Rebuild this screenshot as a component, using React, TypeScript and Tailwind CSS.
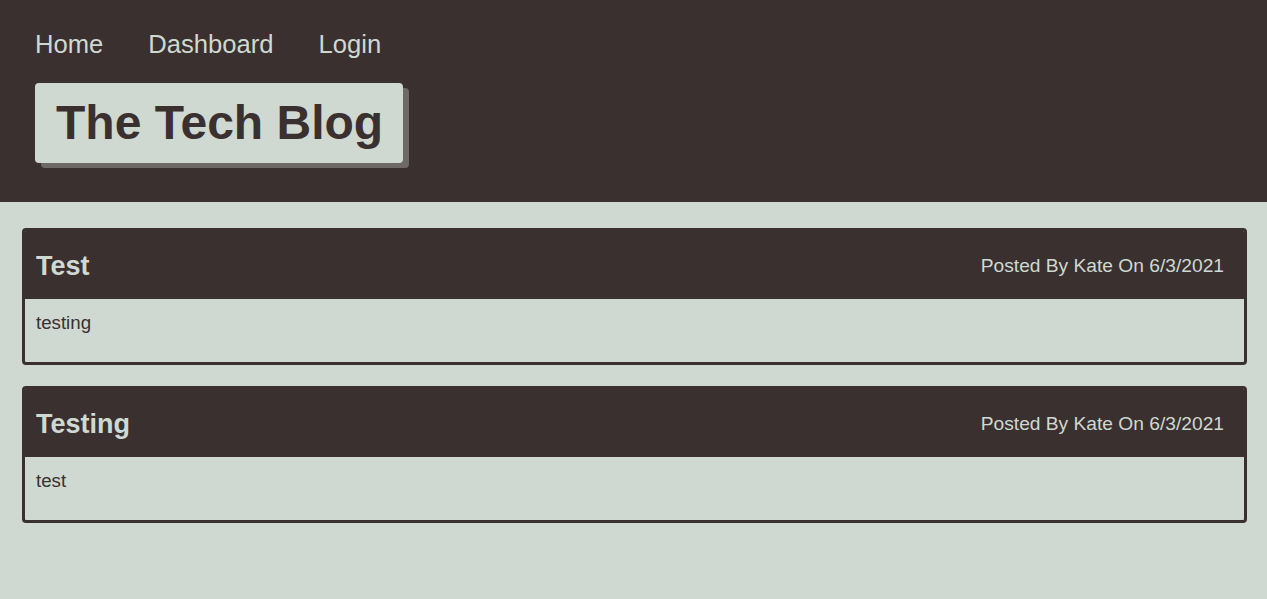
const posts = [
  { title: "Test", author: "Kate", date: "6/3/2021", body: "testing" },
  { title: "Testing", author: "Kate", date: "6/3/2021", body: "test" },
];

const navLinks = ["Home", "Dashboard", "Login"];

export default function App() {
  return (
    <div className="min-h-[599px] bg-[#cfd9d1] font-['Liberation_Sans',Arial,sans-serif]">
      <header className="h-[202px] bg-[#3a3030] px-[35px] pt-[29px]">
        <nav className="flex gap-[45px] text-[25.6px] leading-[30px] text-[#cfd9d1]">
          {navLinks.map((link) => (
            <a key={link} href="#">
              {link}
            </a>
          ))}
        </nav>
        <div className="mt-[24px] inline-flex h-[80px] items-center rounded-[4px] bg-[#cfd9d1] pl-[21px] pr-[20px] shadow-[6px_5px_0_#6e6968]">
          <h1 className="text-[48px] font-bold leading-none text-[#3a3030]">
            The Tech Blog
          </h1>
        </div>
      </header>

      <main className="flex flex-col gap-[21px] pl-[22px] pr-[20px] pt-[26px]">
        {posts.map((post) => (
          <article
            key={post.title}
            className="overflow-hidden rounded-[4px] border-[3px] border-[#3a3030]"
          >
            <div className="flex h-[68px] items-center justify-between bg-[#3a3030] pl-[11px] pr-[20px] pt-[2px]">
              <h2 className="text-[27px] font-bold text-[#cfd9d1]">
                {post.title}
              </h2>
              <p className="text-[19.2px] text-[#cfd9d1]">
                Posted By {post.author} On {post.date}
              </p>
            </div>
            <div className="h-[63px] px-[11px] pt-[13px] text-[18.7px] leading-[22px] text-[#3a3030]">
              {post.body}
            </div>
          </article>
        ))}
      </main>
    </div>
  );
}
